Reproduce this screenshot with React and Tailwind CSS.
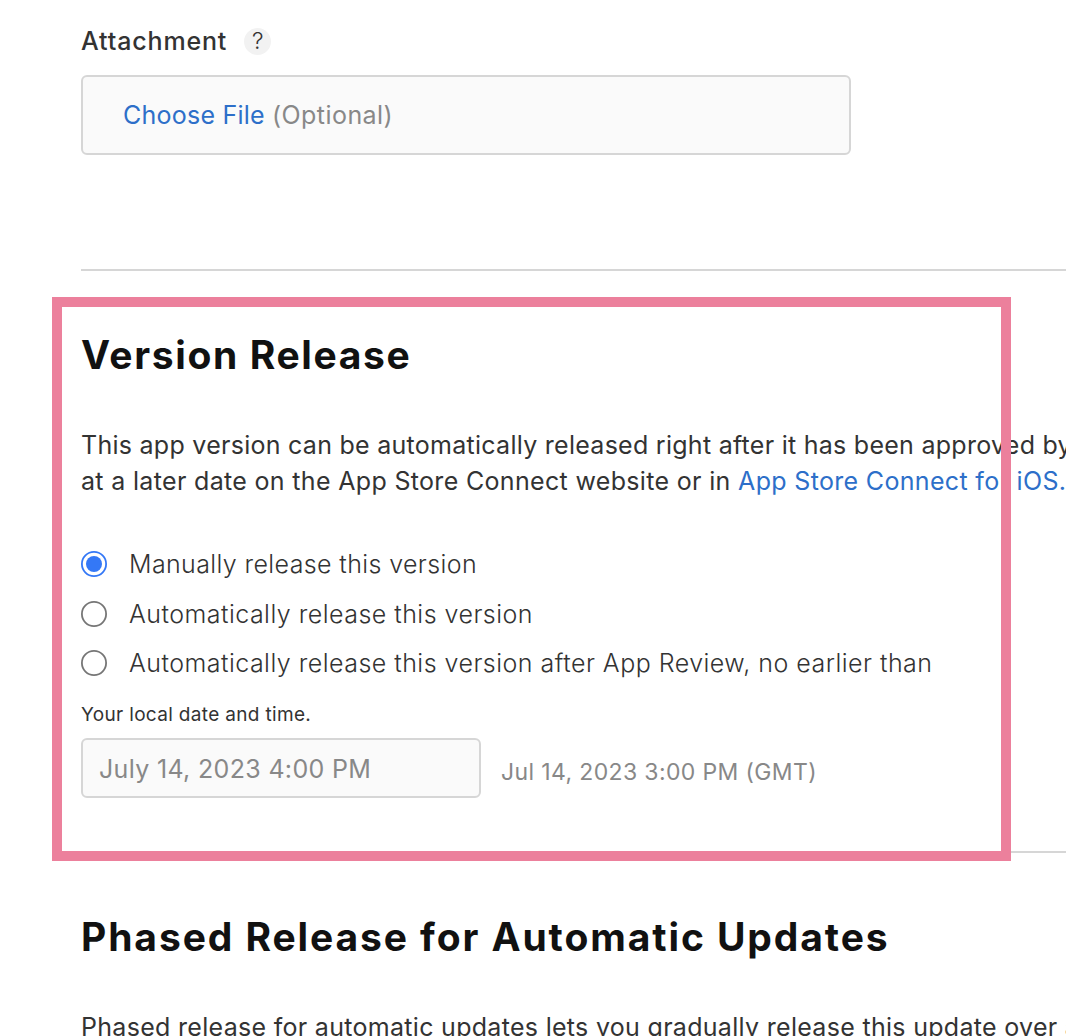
const Radio = ({ checked, children, className }) => (
  <label className={`flex items-center gap-[22px] text-[25px] font-light text-[#333333] whitespace-nowrap ${className}`}>
    <svg width="26" height="26" viewBox="0 0 26 26" className="shrink-0">
      <circle cx="13" cy="13" r="12.1" fill="#fff" stroke={checked ? "#3478f6" : "#767676"} strokeWidth="1.8" />
      {checked && <circle cx="13" cy="13" r="8" fill="#3478f6" />}
    </svg>
    <span className="pt-[2px]">{children}</span>
  </label>
);

export default function App() {
  return (
    <main className="relative h-[1036px] w-[1066px] overflow-hidden bg-white pl-[81px] font-['Inter',sans-serif] text-[#333333]">
      <section className="h-[269px] pt-[24px]">
        <div className="flex h-[34px] items-center gap-[17px]">
          <h3 className="pt-[2px] text-[25px] font-medium tracking-[0.85px]">Attachment</h3>
          <span className="flex size-[27px] items-center justify-center rounded-full bg-[#f2f2f2] text-[23px] leading-[27px] font-light">?</span>
        </div>
        <div className="mt-[17px] flex h-[80px] w-[770px] items-center gap-[7px] rounded-[6px] border-2 border-[#d6d6d6] bg-[#fafafa] pt-[2px] pl-[40px] text-[25px]">
          <a className="tracking-[0.24px] text-[#2d6fc9]">Choose File</a>
          <span className="tracking-[0.45px] text-[#888888]">(Optional)</span>
        </div>
      </section>
      <section className="h-[582px] border-t-2 border-[#d6d6d6] pt-[59px]">
        <h2 className="text-[39px] leading-[50px] font-bold tracking-[1.63px] text-[#111111]">Version Release</h2>
        <p className="mt-[47px] text-[25px] leading-[36px] tracking-[0.33px] whitespace-nowrap">
          <span className="tracking-[0.27px]">This app version can be automatically released right after it has been approved by</span><br />
          at a later date on the App Store Connect website or in <a className="text-[#2d6fc9]">App Store Connect for iOS.</a>
        </p>
        <div className="mt-[40px]">
          <Radio checked className="h-[50px] tracking-[0.38px]">Manually release this version</Radio>
          <Radio className="h-[50px] tracking-[0.47px]">Automatically release this version</Radio>
          <Radio className="h-[48px] tracking-[0.47px]">Automatically release this version after App Review, no earlier than</Radio>
        </div>
        <p className="mt-[16px] text-[19px] leading-[24px] tracking-[0.33px]">Your local date and time.</p>
        <div className="mt-[11px] flex gap-[20px] text-[#888888]">
          <div className="flex h-[60px] w-[400px] items-center rounded-[6px] border-2 border-[#d6d6d6] bg-[#fafafa] pt-[3px] pl-[16px] text-[25px] tracking-[0.33px]">July 14, 2023 4:00 PM</div>
          <span className="pt-[19px] text-[23px] leading-[30px] tracking-[0.37px]">Jul 14, 2023 3:00 PM (GMT)</span>
        </div>
      </section>
      <section className="border-t-2 border-[#d6d6d6] pt-[59px]">
        <h2 className="text-[39px] leading-[50px] font-bold tracking-[1.9px] text-[#111111]">Phased Release for Automatic Updates</h2>
        <p className="mt-[47px] text-[25px] leading-[36px] tracking-[0.3px] whitespace-nowrap">Phased release for automatic updates lets you gradually release this update over a</p>
      </section>
      <div className="pointer-events-none absolute top-[297px] left-[52px] h-[564px] w-[959px] border-[10px] border-[#ec809c]" />
    </main>
  );
}
